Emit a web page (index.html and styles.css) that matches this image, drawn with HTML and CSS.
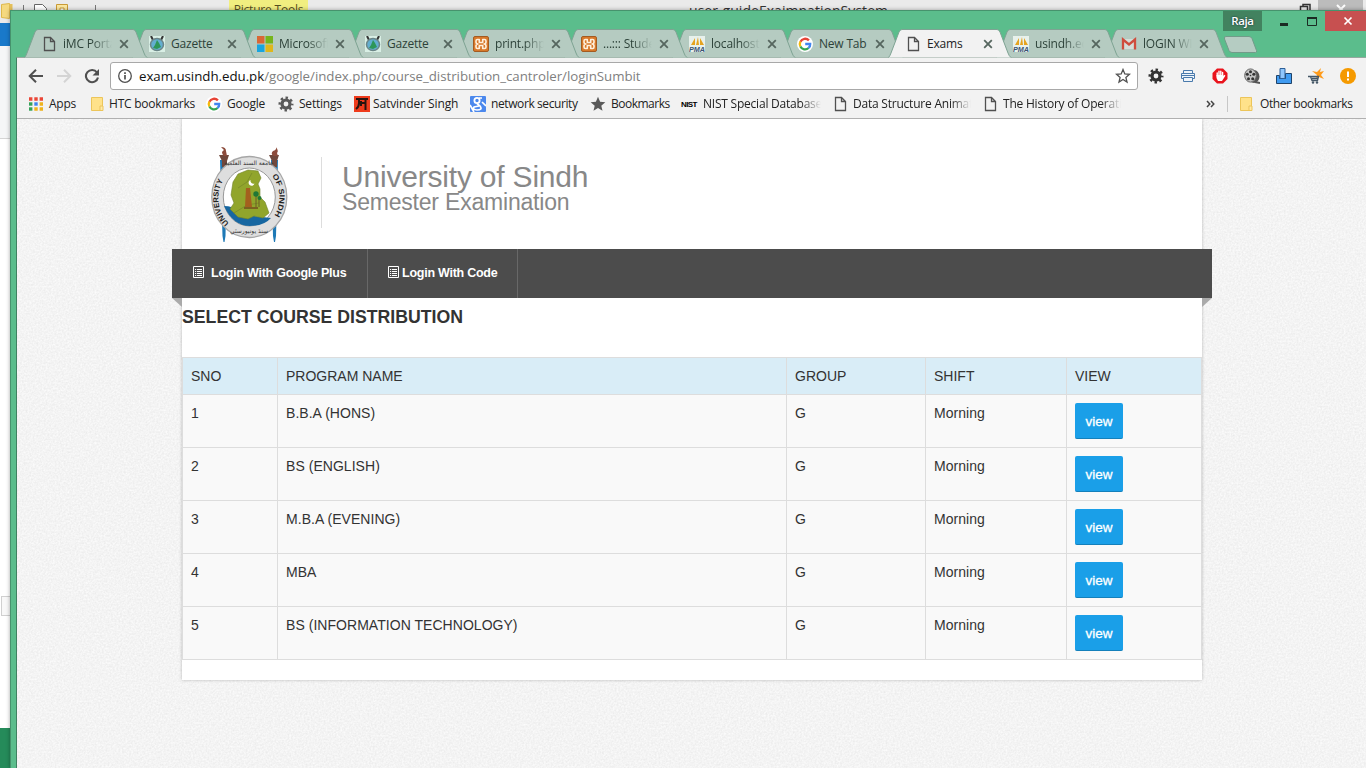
FILE: index.html
```html
<!DOCTYPE html>
<html lang="en">
<head>
<meta charset="utf-8">
<title>Exams</title>
<link rel="stylesheet" href="styles.css">
</head>
<body>
<svg class="defs" width="0" height="0">
  <symbol id="doc" viewBox="0 0 16 16"><path d="M3.500 1.500h6l4 4v9h-10z M9.500 1.500v4h4" fill="none" stroke="#505050" stroke-width="1.300"/></symbol>
  <symbol id="crest" viewBox="0 0 16 16"><path fill="#d9efe5" d="M0 0h16v16H0z"/><path d="M2 0l2 4M14 0l-2 4" stroke="#333" stroke-width="2"/><ellipse cx="8" cy="8.500" rx="6.500" ry="6" fill="#63aed0" stroke="#6b8587" stroke-width="1.500"/><path d="M8 4l2 3 2 4-4 2-4-1 2-3z" fill="#2d9659"/></symbol>
  <symbol id="ms" viewBox="0 0 16 16"><path fill="#d96736" d="M0 0h7.500v7.500H0z"/><path fill="#75b51b" d="M8.500 0H16v7.500H8.500z"/><path fill="#18a5df" d="M0 8.500h7.500V16H0z"/><path fill="#dfb71b" d="M8.500 8.500H16V16H8.500z"/></symbol>
  <symbol id="xampp" viewBox="0 0 16 16"><rect x=".5" y=".5" width="15" height="15" rx="1.500" fill="#d8792a" stroke="#a35b22"/><path d="M6.300 3.500h-2q-1.300 0-1.300 1.500v1q0 2 2 2-2 0-2 2v1q0 1.500 1.300 1.500h2V9.500h3.400v3h2q1.300 0 1.300-1.500v-1q0-2-2-2 2 0 2-2V5q0-1.500-1.300-1.500h-2v3H6.300z" fill="none" stroke="#fff0dc" stroke-width="1.600" stroke-linejoin="round"/></symbol>
  <symbol id="pma" viewBox="0 0 16 16"><path fill="#e8f1ec" d="M0 0h16v16H0z"/><path d="M2 9L6 2v7zM7 9l2-8 1 8zM11 9V2l4 7z" fill="#e5a320"/><text x="0" y="16" class="pma-text" textLength="16" lengthAdjust="spacingAndGlyphs">PMA</text></symbol>
  <symbol id="google" viewBox="0 0 16 16"><circle cx="8" cy="8" r="8" fill="#fff"/><path d="M3.400 5.700A5.200 5.200 0 0 1 11.900 4.400" stroke="#e74436" stroke-width="2.300" fill="none"/><path d="M3.400 5.600a5.200 5.200 0 0 0 0 4.900" stroke="#f6b90b" stroke-width="2.300" fill="none"/><path d="M3.400 10.400a5.200 5.200 0 0 0 8.200 1.600" stroke="#35a652" stroke-width="2.300" fill="none"/><path d="M11.500 12a5 5 0 0 0 1.700-4H8.200" stroke="#4285f0" stroke-width="2.300" fill="none"/></symbol>
  <symbol id="gmail" viewBox="0 0 16 16"><path d="M2.500 3h11v10h-11z" fill="#d5ded9"/><path d="M2 13.500V3.500l6 5 6-5v10" fill="none" stroke="#cf4d3d" stroke-width="2.300"/></symbol>
  <symbol id="x" viewBox="0 0 10 10"><path d="M1.200 1.200l7.600 7.600M8.800 1.200L1.200 8.800" stroke="currentColor" stroke-width="1.800"/></symbol>
  <symbol id="tab" viewBox="0 0 124 29"><path d="M.5 28.500Q2 27 3 24L11 3Q12 .5 14 .5h95q2 0 3 2.500l8 21q1 3 3 4.500z" fill="currentColor"/><path d="M.5 28.500Q2 27 3 24L11 3Q12 .5 14 .5h95q2 0 3 2.500l8 21q1 3 3 4.500" fill="none" stroke="#7ea393"/></symbol>
  <symbol id="folder" viewBox="0 0 14 16"><path d="M1.500 1.500h11v13h-11z" fill="#ffe28a" stroke="#ecc55a"/><path d="M10 10h3v4.500h-3z" fill="#ffe9a8" stroke="#ecc55a"/></symbol>
  <symbol id="gear" viewBox="0 0 16 16"><circle cx="8" cy="8" r="4" fill="none" stroke="currentColor" stroke-width="3.200"/><circle cx="8" cy="8" r="6.300" fill="none" stroke="currentColor" stroke-width="2.400" stroke-dasharray="2.480 2.468" stroke-dashoffset="1.240"/></symbol>
  <symbol id="list" viewBox="0 0 12 13"><path d="M.5.500h10v11H.5z" fill="none" stroke="#fff"/><path d="M2 3.500h1.200M2 5.500h1.200M2 7.500h1.200M2 9.500h1.200M4 3.500h5M4 5.500h5M4 7.500h5M4 9.500h5" stroke="#fff"/></symbol>
</svg>

<div class="behind">
  <div class="behind-title">
    <svg class="behind-icons" width="100" height="20" viewBox="0 0 100 20"><path d="M1.500 4.500l8-1v15l-8-1z" fill="#f5d980" stroke="#dfb84b"/><path d="M9.500 4h3v13h-3z" fill="#e5c05a"/><path d="M23.500 5v8M95.500 5v8" stroke="#777"/><path d="M34.500 12V4.500h8l4 4V12" fill="#fff" stroke="#666"/><path d="M56.500 12V4.500h11V12" fill="#fbe7a0" stroke="#c99a35"/><path d="M60 12V8h4v4" fill="#fff" stroke="#c99a35"/></svg>
    <span class="picture-tools">Picture Tools</span>
    <span class="behind-name">user-guideExaimnationSystem</span>
    <svg class="behind-buttons" width="68" height="10"><path d="M2.500 10V6.500h7V10M5 6V4.500h7V10" fill="none" stroke="#333" stroke-width="1.500"/><path d="M20 0h45v10H20z" fill="#bcbcbc"/><path d="M39 5l8 8M47 5l-8 8" stroke="#fff" stroke-width="2"/></svg>
  </div>
  <div class="behind-blue"></div><div class="behind-ribbon"></div><div class="behind-box"></div><div class="behind-green"></div>
</div>

<div class="window">
  <div class="caption">
    <span class="user">Raja</span>
    <svg width="68" height="20"><path d="M9 13.500h8" stroke="#1b2b23" stroke-width="3"/><path d="M36.500 7v7.500h9V7z" fill="none" stroke="#1b2b23"/><path d="M36 7h10" stroke="#1b2b23" stroke-width="2"/></svg>
    <span class="close"><svg width="10" height="10"><path d="M1.500 1.500l7 7M8.500 1.500l-7 7" stroke="#fff" stroke-width="1.700"/></svg></span>
  </div>
  <div class="tabs">
    <div class="tab t1"><svg class="shape"><use href="#tab"/></svg><svg class="fav"><use href="#doc"/></svg><span class="label fade">iMC Portal</span><svg class="tx"><use href="#x"/></svg></div>
    <div class="tab t2"><svg class="shape"><use href="#tab"/></svg><svg class="fav"><use href="#crest"/></svg><span class="label">Gazette</span><svg class="tx"><use href="#x"/></svg></div>
    <div class="tab t3"><svg class="shape"><use href="#tab"/></svg><svg class="fav"><use href="#ms"/></svg><span class="label fade">Microsoft</span><svg class="tx"><use href="#x"/></svg></div>
    <div class="tab t4"><svg class="shape"><use href="#tab"/></svg><svg class="fav"><use href="#crest"/></svg><span class="label">Gazette</span><svg class="tx"><use href="#x"/></svg></div>
    <div class="tab t5"><svg class="shape"><use href="#tab"/></svg><svg class="fav"><use href="#xampp"/></svg><span class="label fade">print.php</span><svg class="tx"><use href="#x"/></svg></div>
    <div class="tab t6"><svg class="shape"><use href="#tab"/></svg><svg class="fav"><use href="#xampp"/></svg><span class="label fade">...::: Student</span><svg class="tx"><use href="#x"/></svg></div>
    <div class="tab t7"><svg class="shape"><use href="#tab"/></svg><svg class="fav"><use href="#pma"/></svg><span class="label fade">localhost /</span><svg class="tx"><use href="#x"/></svg></div>
    <div class="tab t8"><svg class="shape"><use href="#tab"/></svg><svg class="fav"><use href="#google"/></svg><span class="label">New Tab</span><svg class="tx"><use href="#x"/></svg></div>
    <div class="tab active"><svg class="shape"><use href="#tab"/></svg><svg class="fav"><use href="#doc"/></svg><span class="label">Exams</span><svg class="tx"><use href="#x"/></svg></div>
    <div class="tab t10"><svg class="shape"><use href="#tab"/></svg><svg class="fav"><use href="#pma"/></svg><span class="label fade">usindh.edu</span><svg class="tx"><use href="#x"/></svg></div>
    <div class="tab t11"><svg class="shape"><use href="#tab"/></svg><svg class="fav"><use href="#gmail"/></svg><span class="label fade">lOGIN WI</span><svg class="tx"><use href="#x"/></svg></div>
    <svg class="newtab" width="36" height="18"><path d="M3 .5h23q2 0 3 2l4.500 12q.5 2-1 2H9q-2 0-3-2L1.500 3Q.8.500 3 .5z" fill="#b5ccc2" stroke="#729b89"/></svg>
  </div>
  <div class="body">
    <div class="toolbar">
      <svg width="16" height="16" viewBox="0 0 16 16"><path d="M15 8H2M8 1.700L1.700 8 8 14.300" fill="none" stroke="#505050" stroke-width="2"/></svg>
      <svg width="16" height="16" viewBox="0 0 16 16"><path d="M1 8h13M8 1.700L14.300 8 8 14.300" fill="none" stroke="#d4d4d4" stroke-width="2"/></svg>
      <svg width="16" height="16" viewBox="0 0 16 16"><path d="M13 4.500A6.100 6.100 0 1 0 14 9.500" fill="none" stroke="#505050" stroke-width="2.100"/><path d="M15 1v6.500H8.500z" fill="#505050"/></svg>
      <div class="omnibox">
        <svg width="16" height="16" viewBox="0 0 16 16"><circle cx="8" cy="8" r="6.300" fill="none" stroke="#505050" stroke-width="1.300"/><path d="M8 7v4.500M8 4.200v1.700" stroke="#505050" stroke-width="1.700"/></svg>
        <span class="url"><b>exam.usindh.edu.pk</b>/google/index.php/course_distribution_cantroler/loginSumbit</span>
        <svg width="16" height="16" viewBox="0 0 16 16"><path d="M8 1.500l1.800 4.400 4.700.4-3.600 3.100 1.100 4.700L8 11.500l-4 2.600 1.100-4.700L1.500 6.300l4.700-.4z" fill="none" stroke="#505050" stroke-width="1.300"/></svg>
      </div>
      <div class="extensions">
        <svg class="dark" width="16" height="16"><use href="#gear"/></svg>
        <svg width="16" height="16" viewBox="0 0 16 16"><path d="M3.500 5V2.500h9V5M1.500 10.500v-5h13v5h-2M3.500 10.500h-2M3.500 9.500h9v4h-9zM1.500 7.500h13" fill="#eef4fa" stroke="#4a7aac"/></svg>
        <svg width="16" height="16" viewBox="0 0 16 16"><path d="M5 .5h6L15.500 5v6L11 15.500H5L.5 11V5z" fill="#e9131c"/><path d="M5.200 8V5M7 7V3.300M8.800 7V3.300M10.600 8V4.500" stroke="#fff" stroke-width="1.400" stroke-linecap="round"/><path d="M4.500 7h6.700v1l1.400-1.200.8 1-3.400 5.200H6L4.500 10z" fill="#fff"/></svg>
        <svg width="16" height="16" viewBox="0 0 16 16"><ellipse cx="10" cy="8.500" rx="5.500" ry="6.500" fill="#555"/><ellipse cx="6.500" cy="7.500" rx="5.800" ry="6.600" fill="#c4c4c4" stroke="#666"/><g fill="#333"><circle cx="6.500" cy="3.700" r="1.500"/><circle cx="3.300" cy="6.300" r="1.500"/><circle cx="4.500" cy="10.700" r="1.500"/><circle cx="8.700" cy="10.700" r="1.500"/><circle cx="9.800" cy="6.300" r="1.500"/><circle cx="6.500" cy="7.500" r=".8"/></g><path d="M11 14l5 1" stroke="#555" stroke-width="2"/></svg>
        <svg width="16" height="16" viewBox="0 0 16 16"><path d="M.5 7.500h3v3h6v-5h6v10H.5z" fill="#409bf1" stroke="#1e4369"/><path d="M4 .5h5v10H4z" fill="#90c6fc" stroke="#2c5f98"/></svg>
        <svg width="16" height="16" viewBox="0 0 16 16"><path d="M4 3l5 1 4-4-1 4 4-1-3 4 3 4-5-2-3 2 1-4z" fill="#ff9c1c"/><path d="M0 8.500h2.500l1.500 4h5.500l1-4H3M4 10.500h6" fill="none" stroke="#455767" stroke-width="1.300"/><circle cx="5" cy="14.500" r="1.200" fill="#455767"/><circle cx="9" cy="14.500" r="1.200" fill="#455767"/></svg>
        <svg width="16" height="16" viewBox="0 0 16 16"><circle cx="8" cy="8" r="8" fill="#f59a00"/><path d="M8 3.500v5.500M8 10.500v2" stroke="#fff" stroke-width="2"/></svg>
      </div>
    </div>
    <div class="bookmarks">
      <a class="bm b-apps"><svg width="14" height="14" viewBox="0 0 14 14"><path d="M0 2h14" stroke="#ea4637" stroke-width="3.400" stroke-dasharray="3.400 1.900"/><path d="M0 7h3.400" stroke="#34a158" stroke-width="3.400"/><path d="M5.300 7h3.400" stroke="#3e82ee" stroke-width="3.400"/><path d="M10.600 7H14M5.300 12H14" stroke="#eeb31c" stroke-width="3.400" stroke-dasharray="3.400 1.900"/><path d="M0 12h3.400" stroke="#34a158" stroke-width="3.400"/></svg><span>Apps</span></a>
      <a class="bm b-htc"><svg width="14" height="16"><use href="#folder"/></svg><span>HTC bookmarks</span></a>
      <a class="bm b-google"><svg width="16" height="16"><use href="#google"/></svg><span>Google</span></a>
      <a class="bm b-set"><svg width="16" height="16"><use href="#gear"/></svg><span>Settings</span></a>
      <a class="bm b-sat"><svg width="16" height="16" viewBox="0 0 16 16"><path fill="#ef3b1c" d="M0 0h16v16H0z"/><path d="M2 3h12M5 3v4q0 4-3 6M4 7h8M11.500 3v11M7 5v5" fill="none" stroke="#28140f" stroke-width="2"/></svg><span>Satvinder Singh</span></a>
      <a class="bm b-net"><svg width="16" height="16" viewBox="0 0 16 16"><rect width="16" height="16" rx="1" fill="#4b88ed"/><circle cx="7" cy="4.500" r="2.600" fill="none" stroke="#fff" stroke-width="1.800"/><path d="M9 2h3M7 7.500l3 2.500q3 4-3 4-5-.5-3-3l5-1M0 9l4 7M12 6l4 4" fill="none" stroke="#fff" stroke-width="1.700"/></svg><span>network security</span></a>
      <a class="bm b-book"><svg width="16" height="16" viewBox="0 0 16 16"><path d="M8 .8l2.100 5 5.200.5-4 3.400 1.200 5.100L8 12.100l-4.500 2.700 1.200-5.100-4-3.400 5.200-.5z" fill="#5a5a5a"/></svg><span>Bookmarks</span></a>
      <a class="bm b-nist"><i class="nist">NIST</i><span class="fade">NIST Special Database</span></a>
      <a class="bm b-data"><svg width="16" height="16"><use href="#doc"/></svg><span class="fade">Data Structure Animation</span></a>
      <a class="bm b-hist"><svg width="16" height="16"><use href="#doc"/></svg><span class="fade">The History of Operating</span></a>
      <svg class="more" width="9" height="8"><path d="M1 1l2.800 3L1 7M5 1l2.800 3L5 7" fill="none" stroke="#444" stroke-width="1.500"/></svg>
      <a class="bm other"><svg width="14" height="16"><use href="#folder"/></svg><span>Other bookmarks</span></a>
    </div>
    <main class="page">
      <svg class="grain" width="1349" height="649"><filter id="paper" x="0" y="0" width="100%" height="100%" color-interpolation-filters="sRGB"><feTurbulence type="fractalNoise" baseFrequency=".55" numOctaves="2"/><feColorMatrix values=".09 0 0 0 .91  .09 0 0 0 .91  .09 0 0 0 .91  0 0 0 0 1"/></filter><rect width="1349" height="649" filter="url(#paper)"/></svg>
      <section class="sheet">
        <header class="brand">
          <svg class="logo" width="84" height="100" viewBox="0 0 84 100">
            <path d="M12 16h7l-1.500 76-1 6h-1l-1-6zM63 16h7l-2 76-1 6h-1l-1-6z" fill="#1e79b6"/>
            <path d="M11 11h10l-2 6v6h-5v-6zM61 11h10l-2 6v6h-5v-6z" fill="#70483c"/>
            <path d="M16 12q-4-4 0-6l-3-3q5 0 5 4l1 5zM66 12q-4-2-1-5 4-1 3-4 3 4 1 6l1 3z" fill="#8c4b3b"/>
            <ellipse cx="41.300" cy="53" rx="37.500" ry="40.500" fill="#dedede" stroke="#a6a6a6" stroke-width="1.300"/>
            <ellipse cx="41.300" cy="53" rx="26" ry="29" fill="#fff" stroke="#999"/>
            <path d="M16 62q5 0 7 1l6 7 34 4q-7 8-21 8-17 0-26-20z" fill="#1767a1"/>
            <path d="M30 30l10-4 10 1 3 7-3 6 2 5v8l5 5 4 11-6 5-9-2-6 3-10-2-8-8 4-6-3-8 2-13z" fill="#91a52c" stroke="#71832a" stroke-width=".6"/>
            <path d="M30 44l9-6 5-9M26 69l13-8 12-2" stroke="#718126" stroke-width=".6" fill="none"/>
            <path d="M38 44h4l2 19h-7z" fill="#a4601e"/><path d="M36 64h14" stroke="#734b1c" stroke-width="1.500"/>
            <path d="M48 50v13M51 54v9" stroke="#6d5b24"/><circle cx="48" cy="50" r="2.700" fill="#217735"/><circle cx="51.500" cy="54" r="2" fill="#217735"/>
            <path d="M42.500 36a3 3 0 1 0 4 3.500 3 3 0 0 1-4-3.500" fill="#fff"/>
            <path id="ringL" d="M21 79A29.500 32 0 0 1 17 34" fill="none"/>
            <path id="ringR" d="M64 32A29.500 32 0 0 1 64 74.500" fill="none"/>
            <path id="low" d="M17 76A34 37 0 0 0 66 76" fill="none"/>
            <text class="seal"><textPath href="#ringL" textLength="46" lengthAdjust="spacingAndGlyphs">UNIVERSITY</textPath></text>
            <text class="seal"><textPath href="#ringR" textLength="42" lengthAdjust="spacingAndGlyphs">OF SINDH</textPath></text>
            <text class="seal-ar" x="41" y="21">جامعة السند العلمية</text>
            <text class="seal-ar" x="41" y="88.500">سنڌ يونيورسٽي</text>
          </svg>
          <div class="titles"><h1>University of Sindh</h1><h2>Semester Examination</h2></div>
        </header>
        <nav class="menu">
          <a class="wide"><svg width="12" height="13"><use href="#list"/></svg>Login With Google Plus</a>
          <a><svg width="12" height="13"><use href="#list"/></svg>Login With Code</a>
        </nav>
        <h3>SELECT COURSE DISTRIBUTION</h3>
        <table>
          <colgroup><col class="c1"><col class="c2"><col class="c3"><col class="c4"><col class="c5"></colgroup>
          <thead><tr><th>SNO</th><th>PROGRAM NAME</th><th>GROUP</th><th>SHIFT</th><th>VIEW</th></tr></thead>
          <tbody>
            <tr><td>1</td><td>B.B.A (HONS)</td><td>G</td><td>Morning</td><td><button>view</button></td></tr>
            <tr><td>2</td><td>BS (ENGLISH)</td><td>G</td><td>Morning</td><td><button>view</button></td></tr>
            <tr><td>3</td><td>M.B.A (EVENING)</td><td>G</td><td>Morning</td><td><button>view</button></td></tr>
            <tr><td>4</td><td>MBA</td><td>G</td><td>Morning</td><td><button>view</button></td></tr>
            <tr><td>5</td><td>BS (INFORMATION TECHNOLOGY)</td><td>G</td><td>Morning</td><td><button>view</button></td></tr>
          </tbody>
        </table>
      </section>
    </main>
  </div>
</div>
</body>
</html>
```
FILE: styles.css
```css
* { box-sizing: border-box; }
html, body { margin: 0; width: 1366px; height: 768px; overflow: hidden; }
body { position: relative; background: #fff; font-family: "Open Sans", "Noto Sans", sans-serif; font-size: 12px; color: #222; }
svg { flex: none; display: block; }
.defs { position: absolute; }
.pma-text { font: italic bold 6.5px "Liberation Sans", sans-serif; fill: #3b5374; }

/* windows lying underneath */
.behind { position: absolute; inset: 0; overflow: hidden; }
.behind-title { position: relative; height: 23px; background: #eaeaea; overflow: hidden; }
.behind-icons { position: absolute; left: 0; top: 0; }
.picture-tools { position: absolute; left: 229px; top: 0; width: 79px; height: 20px; background: #f1ee80; text-align: center; line-height: 20px; letter-spacing: -.2px; color: #554f21; }
.behind-name { position: absolute; left: 689px; top: 0; line-height: 22px; font-size: 14px; letter-spacing: .04px; color: #333; }
.behind-buttons { position: absolute; left: 1298px; top: 0; }
.behind-blue { width: 10px; height: 23px; background: #1979ca; }
.behind-ribbon { width: 10px; height: 93px; background: #f5f6f7; border-bottom: 1px solid #d5d5d5; }
.behind-box { width: 12px; height: 20px; margin: 457px 0 0 1px; background: #f8f8f8; border: 1px solid #d0d0d0; }
.behind-green { height: 40px; margin-top: 112px; width: 10px; background: #258b5a; }

.window { position: absolute; left: 10px; top: 10px; width: 1356px; height: 758px; background: #5bbd8c; border-left: 1px solid #46936d; border-top: 1px solid #46936d; box-shadow: 0 0 4px rgba(0,0,0,.35); }
.caption { height: 18px; display: flex; justify-content: flex-end; align-items: flex-start; }
.user { width: 39px; height: 20px; background: #42825f; color: #fff; font-weight: 600; font-size: 11.5px; line-height: 20px; text-align: center; letter-spacing: -.4px; text-shadow: 0 0 2px #123; }
.caption > svg { width: 63px; margin-left: 9px; margin-right: -9px; }
.close { z-index: 1; width: 41px; height: 20px; background: #c75050; display: flex; align-items: center; justify-content: center; padding-left: 4px; }
.tabs { display: flex; height: 28px; padding-left: 13px; }
.tab { position: relative; width: 108px; height: 29px; flex: none; display: flex; align-items: center; color: #b5cbc1; }
.shape { position: absolute; left: 0; top: 0; width: 124px; height: 29px; }
.fav { position: relative; width: 16px; height: 16px; margin: 1px 6px 0 17px; }
.label { position: relative; width: 49px; white-space: nowrap; overflow: hidden; color: #2d4239; line-height: 18px; letter-spacing: -.2px; }
.fade { overflow: hidden; -webkit-mask-image: linear-gradient(90deg, #000 calc(100% - 20px), transparent); mask-image: linear-gradient(90deg, #000 calc(100% - 20px), transparent); }
.tx { position: relative; width: 10px; height: 10px; margin: 1px 0 0 7px; color: #56665f; }
.t1 { z-index: 10; } .t2 { z-index: 9; } .t3 { z-index: 8; } .t4 { z-index: 7; } .t5 { z-index: 6; } .t6 { z-index: 5; } .t7 { z-index: 4; } .t8 { z-index: 3; } .t10 { z-index: 2; } .t11 { z-index: 1; }
.active { z-index: 11; color: #f2f2f2; }
.active .label { color: #222; }
.newtab { margin: 7px 0 0 11px; }

.body { position: relative; margin-left: 5px; width: 1350px; height: 711px; background: #f2f2f2; border-left: 1px solid #3f8161; border-top: 1px solid #96a89f; }
.toolbar { height: 32px; display: flex; align-items: center; padding: 3px 10px 0 11px; }
.toolbar > svg { margin-right: 12px; }
.toolbar > svg:nth-child(3) { margin-right: 10px; }
.omnibox { width: 1028px; height: 28px; border: 1px solid #a8a8a8; border-radius: 3px; background: #fff; display: flex; align-items: center; padding: 0 6px; gap: 6px; }
.url { flex: 1; font-size: 13.3px; letter-spacing: -.035px; color: #808080; white-space: nowrap; }
.url b { font-weight: 400; color: #111; }
.extensions { display: flex; gap: 16px; margin-left: 10px; }
.dark { color: #333; }
.bookmarks { height: 29px; display: flex; align-items: center; border-bottom: 1px solid #b0b0b0; padding-left: 12px; }
.bm { display: flex; align-items: center; gap: 6px; white-space: nowrap; color: #222; letter-spacing: -.22px; flex: none; }
.bm svg { color: #5a5a5a; }
.bm span { line-height: 18px; }
.b-apps { width: 61px; } .b-htc { width: 116px; gap: 5px; } .b-google { width: 72px; gap: 5px; } .b-set { width: 76px; gap: 5px; } .b-sat { width: 116px; gap: 3px; letter-spacing: -.1px; }
.b-net { width: 120px; gap: 5px; letter-spacing: -.4px; } .b-book { width: 91px; gap: 5px; letter-spacing: -.5px; } .b-nist { width: 151px; gap: 4px; } .b-data { width: 150px; gap: 5px; } .b-hist { width: 224px; gap: 5px; }
.b-nist .fade, .b-data .fade, .b-hist .fade { width: 118px; }
.nist { width: 18px; font: 700 8px "Liberation Sans", sans-serif; letter-spacing: -.6px; color: #000; }
.more { margin-right: 12px; }
.other { border-left: 1px solid #c7c7c7; height: 16px; padding-left: 11px; gap: 7px; letter-spacing: -.4px; }

.page { position: relative; height: 649px; overflow: hidden; font-family: "Liberation Sans", Arial, sans-serif; }
.grain { position: absolute; inset: 0; }
.sheet { position: relative; width: 1020px; height: 561px; margin-left: 165px; background: #fff; box-shadow: 0 0 3px rgba(0,0,0,.25); }
.brand { height: 130px; display: flex; padding: 25px 0 0 26px; }
.titles { height: 71px; margin: 13px 0 0 29px; padding: 4px 0 0 20px; border-left: 1px solid #ddd; color: #888; }
h1, h2 { font-weight: 400; margin: 0; }
h1 { font-size: 30px; line-height: 31px; letter-spacing: -.2px; }
h2 { font-size: 23px; line-height: 20px; letter-spacing: -.2px; }
.seal { font: bold 7.5px "Liberation Sans", sans-serif; fill: #222; }
.seal-ar { font: 6px "DejaVu Sans", sans-serif; fill: #333; text-anchor: middle; }
.menu { position: relative; margin: 0 -10px; height: 49px; background: #4c4c4c; display: flex; }
.menu::before, .menu::after { content: ""; position: absolute; top: 49px; border-top: 9px solid #aaa; }
.menu::before { left: 0; border-left: 10px solid transparent; }
.menu::after { right: 0; border-right: 10px solid transparent; }
.menu a { width: 150px; padding-left: 20px; display: flex; align-items: center; gap: 2px; border-right: 1px solid #686868; color: #fff; font-size: 12.5px; font-weight: 700; letter-spacing: -.25px; padding-bottom: 2px; white-space: nowrap; }
.menu a.wide { width: 196px; padding-left: 21px; gap: 6px; }
h3 { margin: 9px 0 29px; font-size: 17.7px; line-height: 21px; color: #333; white-space: nowrap; }
table { table-layout: fixed; width: 1020px; border-spacing: 0; border-left: 1px solid #ddd; border-top: 1px solid #ddd; font-size: 14px; line-height: 20px; color: #333; }
.c1 { width: 95px; } .c2 { width: 509px; } .c3 { width: 139px; } .c4 { width: 141px; } .c5 { width: 135px; }
th, td { text-align: left; vertical-align: top; padding: 8px; border-right: 1px solid #ddd; border-bottom: 1px solid #ddd; font-weight: 400; }
th { background: #d9edf7; }
td { background: #f9f9f9; letter-spacing: .04px; }
button { display: block; width: 48px; height: 36px; padding: 2px 0 0; border: 0; border-bottom: 1px solid #1480bb; border-radius: 2px; background: #1a9fe8; color: #fff; font: 13.5px "Liberation Sans", Arial, sans-serif; -webkit-text-stroke: .3px #fff; }
```
